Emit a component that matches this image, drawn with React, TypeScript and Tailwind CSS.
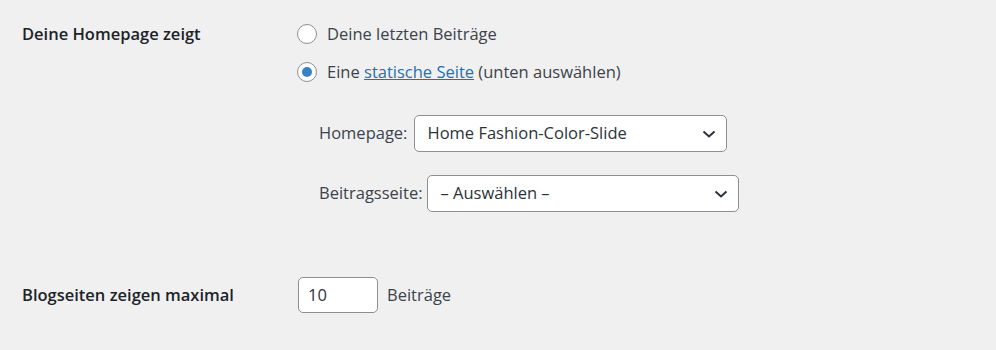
import { useState } from 'react';

const Chevron = () => (
  <svg width="14" height="8" viewBox="0 0 14 8" className="shrink-0">
    <polyline points="1.5,1.5 7,6.5 12.5,1.5" fill="none" stroke="#2c3338" strokeWidth="2" />
  </svg>
);

const Radio = ({ checked, onClick }: { checked: boolean; onClick: () => void }) => (
  <span
    onClick={onClick}
    className="w-5 h-5 rounded-full border border-[#8c8f94] bg-white flex items-center justify-center shrink-0 cursor-pointer"
  >
    {checked && <span className="w-[10px] h-[10px] rounded-full bg-[#3582c4]" />}
  </span>
);

const Select = ({ value, width }: { value: string; width: string }) => (
  <div
    className={`${width} h-[37px] bg-white border border-[#8c8f94] rounded-[5px] flex items-center justify-between pl-[12px] pr-[10px] text-[#2c3338]`}
  >
    <span>{value}</span>
    <Chevron />
  </div>
);

const App = () => {
  const [mode, setMode] = useState('page');
  return (
    <div className="bg-[#f0f0f1] w-[996px] h-[350px] font-['Open_Sans',sans-serif] text-[16.5px] text-[#3c434a] leading-none">
      <div className="flex pt-[24px] pl-[22px]">
        <div className="w-[275px] font-semibold text-[#1d2327] h-[20px] flex items-center">Deine Homepage zeigt</div>
        <div className="flex flex-col">
          <div className="flex items-center gap-[10px] h-[20px]">
            <Radio checked={mode === 'posts'} onClick={() => setMode('posts')} />
            <span>Deine letzten Beiträge</span>
          </div>
          <div className="flex items-center gap-[10px] h-[20px] mt-[18px]">
            <Radio checked={mode === 'page'} onClick={() => setMode('page')} />
            <span>
              Eine <a className="text-[#2271b1] underline">statische Seite</a> (unten auswählen)
            </span>
          </div>
          <div className="flex flex-col pl-[22px] mt-[33px] gap-[23px]">
            <div className="flex items-center gap-[7px]">
              <span>Homepage:</span>
              <Select value="Home Fashion-Color-Slide" width="w-[313px]" />
            </div>
            <div className="flex items-center gap-[5px]">
              <span>Beitragsseite:</span>
              <Select value="– Auswählen –" width="w-[312px]" />
            </div>
          </div>
        </div>
      </div>
      <div className="flex items-center pl-[22px] mt-[65px]">
        <div className="w-[276px] font-semibold text-[#1d2327]">Blogseiten zeigen maximal</div>
        <div className="w-[80px] h-[36px] bg-white border border-[#8c8f94] rounded-[5px] flex items-center pl-[9px] text-[#2c3338]">
          10
        </div>
        <span className="ml-[9px]">Beiträge</span>
      </div>
    </div>
  );
};

export default App;
